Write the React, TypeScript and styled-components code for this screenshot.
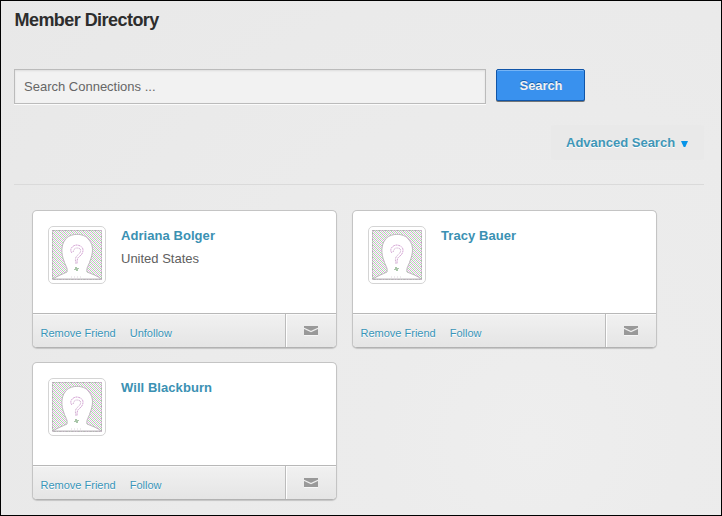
import React from "react";
import styled, { createGlobalStyle } from "styled-components";

const GlobalStyle = createGlobalStyle`
  * { box-sizing: border-box; }
  body { margin: 0; font-family: "Liberation Sans", Arial, sans-serif; }
  button, input { font-family: inherit; }
`;

const Page = styled.main`
  width: 722px;
  height: 516px;
  border: 1px solid #000;
  padding: 9px 17px 0 13px;
  overflow: hidden;
  background: radial-gradient(circle at 530px 440px, #eeeeee 0, #ececec 150px, #ebebeb 340px, #e8e8e8 700px);
`;

const Title = styled.h1`
  margin: 0;
  height: 20px;
  padding-left: 0.5px;
  font-size: 18px;
  line-height: 20px;
  letter-spacing: -0.55px;
  color: #2d2d2d;
`;

const SearchForm = styled.form`
  display: flex;
  gap: 10px;
  margin-top: 39px;
`;

const SearchInput = styled.input`
  width: 472px;
  height: 35px;
  padding: 0 9px;
  border: 1px solid #bbb;
  border-radius: 0;
  outline: none;
  background: #f2f2f2;
  box-shadow: inset 0 1px 2px #dedede, 0 1px 0 #fbfbfb;
  font-size: 13px;
  color: #666;
  &::placeholder { color: #666; opacity: 1; }
`;

const SearchButton = styled.button`
  width: 89px;
  height: 32px;
  padding: 1px 0 0 1px;
  border: 1px solid #1055a8;
  border-radius: 2px;
  background: #3991ee;
  box-shadow: inset 0 1px 0 #76b4f5, 0 1px 0 #747779;
  color: #f2f2f2;
  font-size: 13px;
  font-weight: bold;
  letter-spacing: -0.1px;
  text-shadow: 0 -1px 0 #1761ad;
`;

const AdvancedBar = styled.div`
  display: flex;
  justify-content: flex-end;
  height: 81px;
  padding-top: 21px;
  border-bottom: 1px solid #dadada;
`;

const AdvancedLink = styled.a`
  display: flex;
  align-items: center;
  gap: 6px;
  width: 153px;
  height: 35px;
  padding-left: 15px;
  border-radius: 3px;
  background: #e9e9e9;
  color: #3f97b8;
  font-size: 13px;
  font-weight: bold;
  text-shadow: 0 1px 0 #fff;
`;

const Arrow = styled.svg`
  display: block;
  width: 7px;
  height: 6px;
  margin-top: 2px;
`;

const Members = styled.section`
  display: grid;
  grid-template-columns: 305px 305px;
  grid-auto-rows: 138px;
  gap: 14px 15px;
  padding: 25px 0 0 18px;
`;

const Card = styled.article`
  display: flex;
  flex-direction: column;
  border: 1px solid #c4c4c4;
  border-bottom-color: #b2b2b2;
  border-radius: 5px;
  overflow: hidden;
  background: #fff;
  box-shadow: 0 1px 1px #c5c5c5;
`;

const CardBody = styled.div`
  display: flex;
  flex: 1;
  gap: 15px;
  padding: 15px;
`;

const AvatarFrame = styled.div`
  width: 58px;
  height: 58px;
  padding: 3px;
  border: 1px solid #d4d4d4;
  border-radius: 5px;
  background: #fff;
`;

const AvatarDrawing = styled.svg`
  display: block;
  width: 50px;
  height: 50px;
`;

const Name = styled.h2`
  margin: 0;
  padding-top: 2px;
  font-size: 13px;
  line-height: 16px;
  letter-spacing: 0.06px;
  color: #3b91b3;
`;

const Country = styled.p`
  margin: 7px 0 0;
  font-size: 13px;
  line-height: 16px;
  color: #606060;
`;

const CardFooter = styled.footer`
  display: flex;
  height: 34px;
  border-top: 1px solid #b8b8b8;
  background: linear-gradient(#f1f1f1, #e5e5e5);
  box-shadow: inset 0 1px 0 #fafafa;
`;

const Actions = styled.nav`
  display: flex;
  flex: 1;
  gap: 14px;
  padding: 12px 0 0 7.5px;
`;

const ActionLink = styled.a`
  font-size: 11px;
  line-height: 14px;
  color: #3895b9;
  text-shadow: 0 1px 0 #fff;
`;

const MessageButton = styled.button`
  display: flex;
  justify-content: center;
  width: 51px;
  padding: 12px 0 0;
  border: 0;
  border-left: 1px solid #bcbcbc;
  background: transparent;
  box-shadow: inset 1px 0 0 #fff;
`;

const Envelope = styled.svg`
  display: block;
  width: 14px;
  height: 10px;
`;

function Avatar({ id }: { id: string }) {
  const pattern = `dots-${id}`;
  return (
    <AvatarFrame>
      <AvatarDrawing viewBox="0 0 50 50" role="img" aria-label="Default profile picture">
        <defs>
          <pattern id={pattern} width="4" height="4" patternUnits="userSpaceOnUse">
            <rect width="4" height="4" fill="#faf8fa" />
            <path d="M0 0h1v1H0zM2 2h1v1H2z" fill="#e6a8e6" />
            <path d="M2 0h1v1H2zM0 2h1v1H0zM3 1h1v1H3zM1 3h1v1H1z" fill="#a6dfa6" />
            <path d="M1 1h1v1H1zM3 3h1v1H3z" fill="#ddbfdd" />
          </pattern>
        </defs>
        <rect width="50" height="50" fill={`url(#${pattern})`} />
        <rect x=".5" y=".5" width="49" height="49" fill="none" stroke="#b3adb3" strokeDasharray="2 1" />
        <path
          d="M1 49C5 46 11 44 15 42C16 38 13 35 12 31C9 24 9 15 13 10C17 3 32 2 37 10C42 15 41 24 38 31C37 35 34 38 35 42C40 44 46 46 49 49Z"
          fill="#fff"
          stroke="#bcb6bc"
        />
        <path d="M20 23C17 20 20 15 25 15C33 16 32 23 28 26C25 28 25 30 25 34" fill="none" stroke="#d3a2d3" strokeWidth="1" strokeDasharray="2 .6" />
        <path d="M21 22C22 20 22 18 25 18C30 18 29 22 27 24C23 27 23 29 24 34" fill="none" stroke="#cda9cd" strokeWidth="1" strokeDasharray="1 .6" />
        <path d="M23 37h2v1h2v1h-1v2h-2v-1h-2v-1h1z" fill="#a9c6a9" />
        <path d="M19 47h12" stroke="#ded5de" strokeDasharray="1 2" />
      </AvatarDrawing>
    </AvatarFrame>
  );
}

interface Member {
  id: string;
  name: string;
  country?: string;
  action: "Follow" | "Unfollow";
}

const members: Member[] = [
  { id: "adriana", name: "Adriana Bolger", country: "United States", action: "Unfollow" },
  { id: "tracy", name: "Tracy Bauer", action: "Follow" },
  { id: "will", name: "Will Blackburn", action: "Follow" },
];

function MemberCard({ member }: { member: Member }) {
  return (
    <Card>
      <CardBody>
        <Avatar id={member.id} />
        <div>
          <Name>{member.name}</Name>
          {member.country && <Country>{member.country}</Country>}
        </div>
      </CardBody>
      <CardFooter>
        <Actions>
          <ActionLink>Remove Friend</ActionLink>
          <ActionLink>{member.action}</ActionLink>
        </Actions>
        <MessageButton aria-label={`Message ${member.name}`}>
          <Envelope viewBox="0 0 14 10">
            <path d="M0 0h14v9H0z" fill="#999" />
            <path d="M0 2.3L7 5.5L14 2.3" fill="none" stroke="#eee" strokeWidth="1.2" />
            <path d="M0 9h14v1H0z" fill="#f6f6f6" />
          </Envelope>
        </MessageButton>
      </CardFooter>
    </Card>
  );
}

export default function App() {
  return (
    <>
      <GlobalStyle />
      <Page>
        <Title>Member Directory</Title>
        <SearchForm onSubmit={(event) => event.preventDefault()}>
          <SearchInput placeholder="Search Connections ..." aria-label="Search Connections" />
          <SearchButton>Search</SearchButton>
        </SearchForm>
        <AdvancedBar>
          <AdvancedLink>
            Advanced Search
            <Arrow viewBox="0 0 7 6"><path d="M0 0h7L4.3 6H2.7z" fill="#0794e8" /></Arrow>
          </AdvancedLink>
        </AdvancedBar>
        <Members>
          {members.map((member) => <MemberCard key={member.id} member={member} />)}
        </Members>
      </Page>
    </>
  );
}
